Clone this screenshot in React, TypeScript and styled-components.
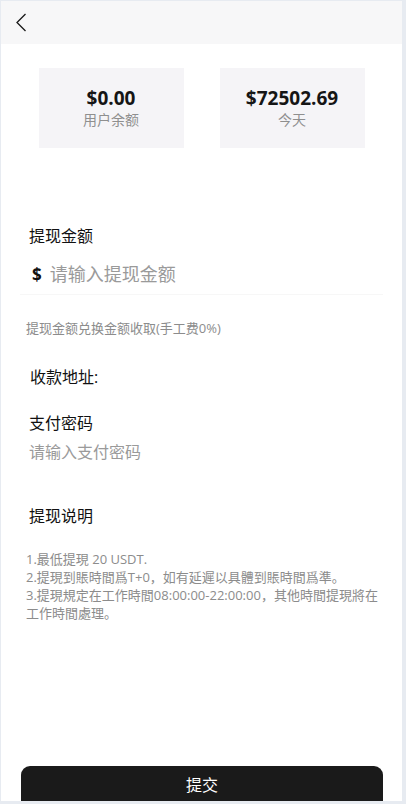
import React from 'react'
import styled, { createGlobalStyle } from 'styled-components'

const GlobalStyle = createGlobalStyle`
  html, body {
    margin: 0;
    padding: 0;
    background: #e7ebf1;
  }
  * {
    box-sizing: border-box;
  }
  body {
    font-family: 'Open Sans', 'Noto Sans CJK SC', sans-serif;
    color: #111;
  }
`

const Page = styled.div`
  margin: 1px 0 0 1px;
  width: 401px;
  height: 800px;
  background: #fff;
  display: flex;
  flex-direction: column;
  overflow: hidden;
`

const TopBar = styled.div`
  height: 43px;
  background: #f7f7f8;
  display: flex;
  align-items: center;
  padding-left: 13px;
`

const BackButton = styled.button`
  border: 0;
  background: none;
  padding: 0;
  width: 14px;
  height: 20px;
  display: flex;
  align-items: center;
  justify-content: center;
  cursor: pointer;
`

const Stats = styled.div`
  display: flex;
  justify-content: center;
  gap: 36px;
  margin-top: 24px;
`

const StatCard = styled.div`
  width: 145px;
  height: 80px;
  background: #f5f4f7;
  display: flex;
  flex-direction: column;
  align-items: center;
  justify-content: center;
`

const StatValue = styled.div`
  font-size: 19px;
  font-weight: 700;
  line-height: 22px;
  color: #151515;
`

const StatLabel = styled.div`
  font-size: 14px;
  line-height: 20px;
  color: #8f8f8f;
  margin-top: 1px;
`

const Form = styled.div`
  padding: 0 19px;
`

const FieldLabel = styled.div<{ $top: number; $indent?: number }>`
  margin-top: ${(p) => p.$top}px;
  padding-left: ${(p) => p.$indent ?? 9}px;
  font-size: 16px;
  line-height: 22px;
  color: #111;
`

const AmountRow = styled.div`
  margin-top: 14px;
  padding-left: 12px;
  display: flex;
  align-items: center;
  height: 26px;
  gap: 8px;
`

const Currency = styled.span`
  font-size: 17px;
  font-weight: 700;
  color: #111;
`

const Field = styled.input<{ $size: number }>`
  border: 0;
  outline: none;
  padding: 0;
  flex: 1;
  min-width: 0;
  font-family: 'Open Sans', 'Noto Sans CJK SC', sans-serif;
  font-size: ${(p) => p.$size}px;
  line-height: 26px;
  color: #111;
  background: transparent;
  &::placeholder {
    color: #9a9a9a;
  }
`

const Divider = styled.div`
  height: 1px;
  margin-top: 7px;
  background: #f7f7f7;
`

const Hint = styled.div`
  margin-top: 24px;
  padding-left: 6px;
  font-size: 13px;
  line-height: 18px;
  color: #8c8c8c;
`

const PasswordRow = styled.div`
  margin-top: 7px;
  padding-left: 9px;
  display: flex;
  height: 22px;
`

const Notes = styled.div`
  margin-top: 23px;
  padding-left: 6px;
  padding-right: 2px;
  font-size: 13px;
  line-height: 18px;
  color: #8c8c8c;
`

const Footer = styled.div`
  margin-top: auto;
  padding: 0 19px 0 20px;
  height: 35px;
`

const SubmitButton = styled.button`
  width: 100%;
  height: 44px;
  border: 0;
  border-radius: 9px;
  background: #1a1a1a;
  color: #fff;
  font-family: 'Open Sans', 'Noto Sans CJK SC', sans-serif;
  font-size: 16px;
  padding: 0 0 8px;
  cursor: pointer;
`

const notes = [
  '1.最低提現 20 USDT.',
  '2.提現到賬時間爲T+0，如有延遲以具體到賬時間爲準。',
  '3.提現規定在工作時間08:00:00-22:00:00，其他時間提現將在工作時間處理。',
]

export default function App() {
  return (
    <>
      <GlobalStyle />
      <Page>
        <TopBar>
          <BackButton aria-label="back">
            <svg width="12" height="19" viewBox="0 0 12 19" fill="none">
              <path d="M10.5 1L2 9.5L10.5 18" stroke="#1a1a1a" strokeWidth="1.3" />
            </svg>
          </BackButton>
        </TopBar>

        <Stats>
          <StatCard>
            <StatValue>$0.00</StatValue>
            <StatLabel>用户余额</StatLabel>
          </StatCard>
          <StatCard>
            <StatValue>$72502.69</StatValue>
            <StatLabel>今天</StatLabel>
          </StatCard>
        </Stats>

        <Form>
          <FieldLabel $top={77}>提现金额</FieldLabel>
          <AmountRow>
            <Currency>$</Currency>
            <Field $size={18} placeholder="请输入提现金额" />
          </AmountRow>
          <Divider />
          <Hint>提现金额兑换金额收取(手工费0%)</Hint>

          <FieldLabel $top={29} $indent={10}>收款地址:</FieldLabel>

          <FieldLabel $top={24}>支付密码</FieldLabel>
          <PasswordRow>
            <Field $size={16} type="password" placeholder="请输入支付密码" />
          </PasswordRow>

          <FieldLabel $top={42}>提现说明</FieldLabel>
          <Notes>
            {notes.map((n) => (
              <div key={n}>{n}</div>
            ))}
          </Notes>
        </Form>

        <Footer>
          <SubmitButton>提交</SubmitButton>
        </Footer>
      </Page>
    </>
  )
}
